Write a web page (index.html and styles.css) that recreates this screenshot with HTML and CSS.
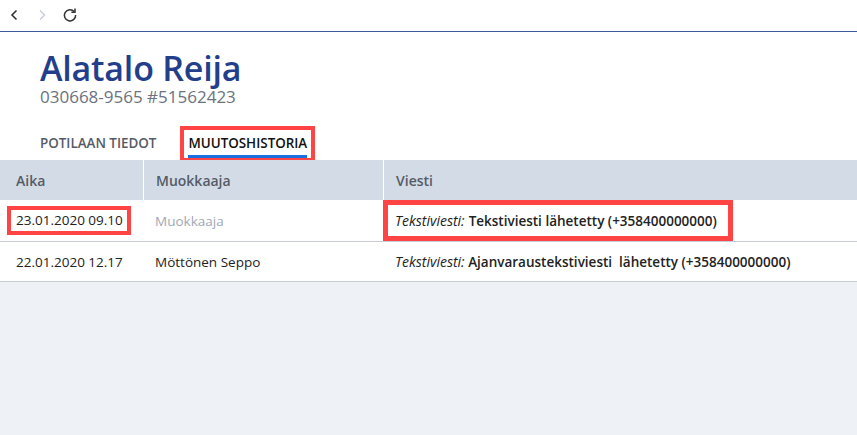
FILE: index.html
```html
<!DOCTYPE html>
<html lang="fi">
<head>
<meta charset="utf-8">
<link rel="stylesheet" href="styles.css">
</head>
<body>
<div class="topbar">
  <button class="nav-btn" aria-label="Takaisin">
    <svg width="16" height="16" viewBox="0 0 16 16"><path d="M10.5 3.5 L6 8 L10.5 12.5" fill="none" stroke="#333" stroke-width="1.6"/></svg>
  </button>
  <button class="nav-btn disabled" aria-label="Eteenpäin">
    <svg width="16" height="16" viewBox="0 0 16 16"><path d="M6 3.5 L10.5 8 L6 12.5" fill="none" stroke="#c5cce0" stroke-width="1.4"/></svg>
  </button>
  <button class="nav-btn" aria-label="Päivitä">
    <svg width="16" height="16" viewBox="0 0 16 16"><path d="M12.2 4.6 A5.6 5.6 0 1 0 13.6 8" fill="none" stroke="#333" stroke-width="1.5"/><path d="M9.4 5.2 L13 5.2 L13 1.6" fill="none" stroke="#333" stroke-width="1.5"/></svg>
  </button>
</div>

<header class="patient">
  <h1 class="patient-name">Alatalo Reija</h1>
  <div class="patient-id">030668-9565 #51562423</div>
</header>

<nav class="tabs">
  <div class="tab">POTILAAN TIEDOT</div>
  <div class="tab active"><span class="tab-label">MUUTOSHISTORIA</span></div>
</nav>

<div class="table">
  <div class="row head">
    <div class="cell">Aika</div>
    <div class="cell">Muokkaaja</div>
    <div class="cell">Viesti</div>
  </div>
  <div class="row first">
    <div class="cell"><span class="mark-date">23.01.2020 09.10</span></div>
    <div class="cell muted">Muokkaaja</div>
    <div class="cell msg mark-msg"><em>Tekstiviesti:</em> <strong>Tekstiviesti lähetetty (+358400000000)</strong></div>
  </div>
  <div class="row">
    <div class="cell">22.01.2020 12.17</div>
    <div class="cell">Möttönen Seppo</div>
    <div class="cell msg"><em>Tekstiviesti:</em> <strong>Ajanvaraustekstiviesti&nbsp; lähetetty (+358400000000)</strong></div>
  </div>
</div>
<div class="filler"></div>
</body>
</html>
```

FILE: styles.css
```css
* { box-sizing: border-box; }
html, body { height: 100%; }
body {
  margin: 0;
  font-family: "Open Sans", "Noto Sans", sans-serif;
  color: #222;
  background: #fff;
  display: flex;
  flex-direction: column;
}
.topbar {
  height: 32px;
  flex: none;
  border-bottom: 1px solid #3d5a96;
  display: flex;
  align-items: center;
  padding: 0 0 2px 6px;
  gap: 12px;
}
.nav-btn {
  border: 0;
  background: none;
  padding: 0;
  width: 16px;
  height: 16px;
  display: flex;
}
.patient {
  padding: 16px 40px 0;
}
.patient-name {
  margin: 0;
  font-size: 34px;
  line-height: 40px;
  font-weight: 600;
  color: #233e8b;
  letter-spacing: -0.2px;
}
.patient-id {
  font-size: 17px;
  line-height: 18px;
  color: #6b7280;
}
.tabs {
  display: flex;
  align-items: flex-start;
  gap: 32px;
  padding: 0 0 0 40px;
  margin-top: 24px;
  height: 30px;
  flex: none;
}
.tab {
  font-size: 13.4px;
  font-weight: 600;
  color: #555b66;
  line-height: 18px;
  padding-top: 4px;
}
.tab.active {
  color: #111;
  height: 28px;
  padding: 4px 4px 0 4px;
  margin-left: -4px;
  outline: 4px solid #f44;
}
.tab-label {
  display: block;
  border-bottom: 3px solid #1a6fe0;
  padding-bottom: 3px;
}
.table {
  font-size: 13.5px;
  flex: none;
}
.row {
  display: grid;
  grid-template-columns: 143px 240px 1fr;
  border-bottom: 1px solid #c7ced9;
  height: 40px;
  align-items: center;
}
.row.first { height: 42px; }
.row.head {
  background: #d3dce6;
  border-bottom: 0;
  height: 40px;
  font-weight: 600;
  font-size: 14px;
  color: #555b66;
}
.row.head .cell + .cell { border-left: 1px solid #fff; }
.row.head .cell { height: 100%; display: flex; align-items: center; }
.cell {
  padding: 0 12px 0 16px;
  white-space: nowrap;
}
.row .cell + .cell { padding-left: 12px; }
.muted { color: #a0a8b6; }
.msg em { font-style: italic; font-size: 14px; }
.msg strong { font-weight: 600; }
.mark-date {
  display: inline-block;
  outline: 4px solid #f44;
  padding: 0 4px 0 5px;
  margin-left: -5px;
  line-height: 21px;
}
.mark-msg {
  height: 100%;
  display: flex;
  align-items: center;
  gap: 4px;
  width: 350px;
  outline: 5px solid #f44;
  outline-offset: -5px;
}
.filler {
  flex: 1;
  background: #eef1f5;
}
```
